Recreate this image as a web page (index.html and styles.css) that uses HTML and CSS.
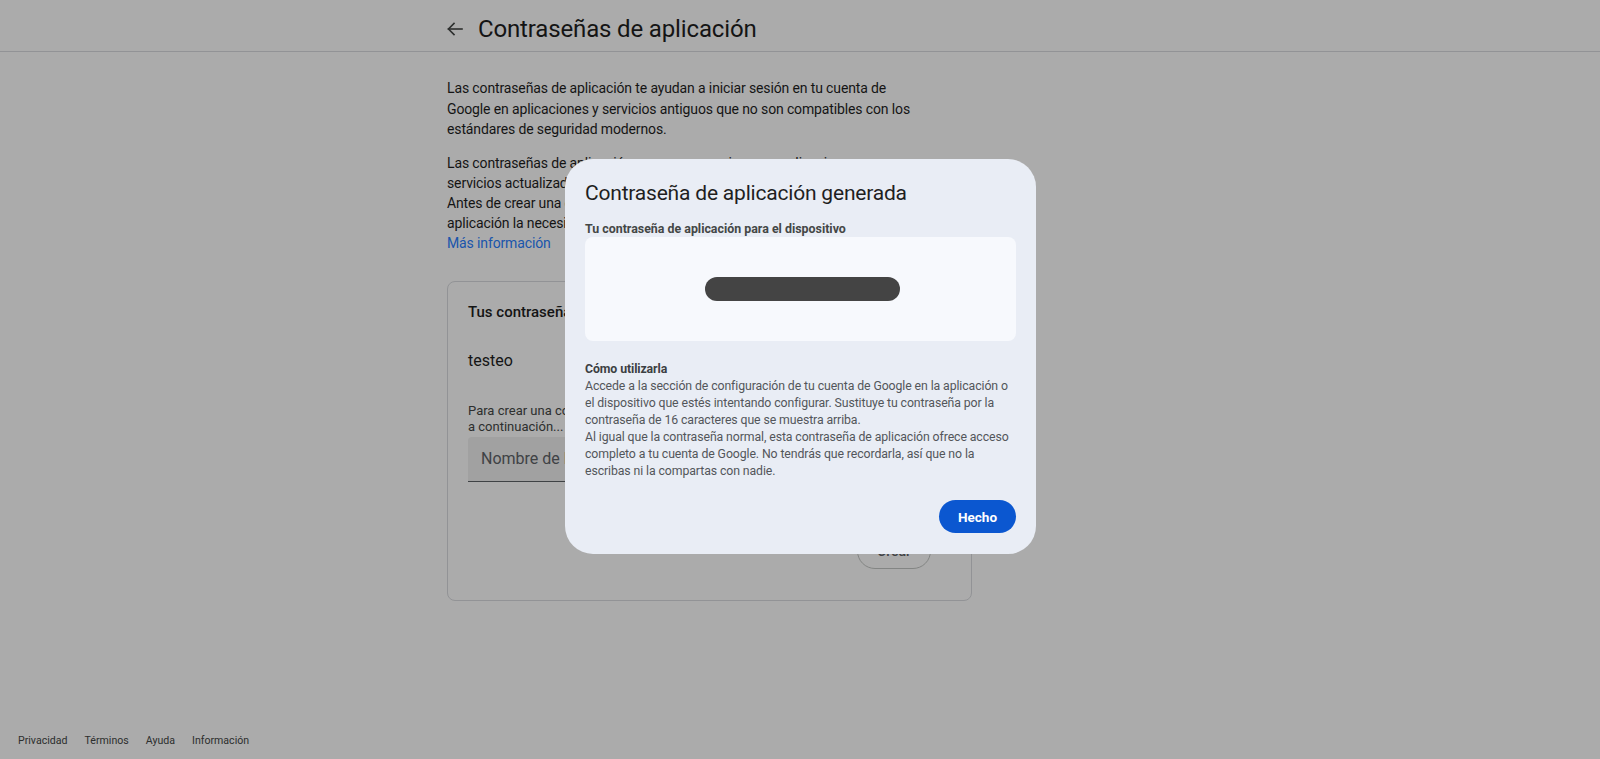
FILE: index.html
```html
<!DOCTYPE html>
<html lang="es">
<head>
<meta charset="utf-8">
<title>Contraseñas de aplicación</title>
<link rel="stylesheet" href="styles.css">
</head>
<body>
<div class="page">
  <header class="topbar">
    <div class="topbar-inner">
      <span class="back-icon">
        <svg width="24" height="24" viewBox="0 0 24 24" fill="none" stroke="#444746" stroke-width="1.6" stroke-linecap="square"><path d="M5.5 12H19"/><path d="M11 6.5L5.5 12L11 17.5"/></svg>
      </span>
      <h1 class="page-title">Contraseñas de aplicación</h1>
    </div>
  </header>

  <main class="content">
    <p class="intro">Las contraseñas de aplicación te ayudan a iniciar sesión en tu cuenta de Google en aplicaciones y servicios antiguos que no son compatibles con los estándares de seguridad modernos.</p>
    <p class="intro intro-tight">Las contraseñas de aplicación no son necesarias para aplicaciones y servicios actualizados.<br>Antes de crear una contraseña de aplicación, comprueba si tu<br>aplicación la necesita para iniciar sesión.<br><a class="link" href="#">Más información</a></p>

    <section class="card">
      <h2 class="card-title">Tus contraseñas de aplicación</h2>
      <div class="app-name">testeo</div>
      <p class="helper">Para crear una contraseña de aplicación nueva, escribe el nombre de la aplicación<br>a continuación...</p>
      <div class="field"><span class="placeholder">Nombre de la aplicación</span></div>
      <div class="card-actions"><button class="btn-outline">Crear</button></div>
    </section>
  </main>

  <footer class="footer">
    <a href="#">Privacidad</a>
    <a href="#">Términos</a>
    <a href="#">Ayuda</a>
    <a href="#">Información</a>
  </footer>
</div>

<div class="scrim"></div>

<div class="dialog" role="dialog">
  <h2 class="dialog-title">Contraseña de aplicación generada</h2>
  <div class="dialog-label">Tu contraseña de aplicación para el dispositivo</div>
  <div class="pw-box"><span class="pw-redacted"></span></div>
  <div class="howto">
    <div class="howto-title">Cómo utilizarla</div>
    <div>Accede a la sección de configuración de tu cuenta de Google en la aplicación o el dispositivo que estés intentando configurar. Sustituye tu contraseña por la contraseña de 16 caracteres que se muestra arriba.</div>
    <div>Al igual que la contraseña normal, esta contraseña de aplicación ofrece acceso completo a tu cuenta de Google. No tendrás que recordarla, así que no la escribas ni la compartas con nadie.</div>
  </div>
  <div class="dialog-actions"><button class="btn-primary">Hecho</button></div>
</div>
</body>
</html>
```

FILE: styles.css
```css
* { box-sizing: border-box; }
html, body { margin: 0; padding: 0; height: 100%; }
body {
  font-family: Roboto, "Liberation Sans", Arial, sans-serif;
  color: #1f1f1f;
  background: #ffffff;
  overflow: hidden;
}
.page {
  min-height: 100vh;
  display: flex;
  flex-direction: column;
}
.topbar {
  height: 52px;
  border-bottom: 1px solid #dadce0;
}
.topbar-inner {
  height: 51px;
  margin-left: 443px;
  display: flex;
  align-items: center;
  gap: 11px;
}
.back-icon { display: flex; width: 24px; height: 24px; margin-top: 6px; }
.page-title {
  margin: 0;
  font-size: 24px;
  font-weight: 400;
  line-height: 32px;
  letter-spacing: -0.15px;
  color: #1f1f1f;
  padding-top: 6px;
}
.content {
  flex: 1;
  margin-left: 447px;
  width: 525px;
  padding-top: 26px;
}
.intro {
  margin: 0 0 13px;
  width: 470px;
  font-size: 14px;
  line-height: 20.5px;
  letter-spacing: -0.13px;
  color: #1f1f1f;
}
.intro-tight { line-height: 20px; }
.link { color: #2b7fff; text-decoration: none; }
.card {
  margin-top: 28px;
  border: 1px solid #dadce0;
  border-radius: 8px;
  padding: 20px 20px 31px;
}
.card-title {
  margin: 0;
  font-size: 15px;
  font-weight: 500;
  line-height: 20px;
}
.app-name {
  margin-top: 27px;
  font-size: 16px;
  line-height: 24px;
}
.helper {
  margin: 30px 0 2px;
  font-size: 13px;
  line-height: 16px;
  color: #444746;
}
.field {
  height: 45px;
  background: #f0f0f0;
  border-bottom: 1px solid #5f6368;
  border-radius: 4px 4px 0 0;
  display: flex;
  align-items: center;
  padding-left: 13px;
}
.placeholder { font-size: 16px; color: #5f6368; }
.card-actions {
  margin-top: 51px;
  display: flex;
  justify-content: flex-end;
  padding-right: 20px;
}
.btn-outline {
  width: 74px;
  height: 36px;
  border: 1px solid #c4c7c5;
  border-radius: 18px;
  background: transparent;
  font-family: inherit;
  font-size: 14px;
  font-weight: 500;
  color: #5f6368;
}
.footer {
  height: 38px;
  display: flex;
  align-items: center;
  gap: 17px;
  padding-left: 18px;
  padding-top: 1px;
}
.footer a {
  font-size: 10.6px;
  color: #444746;
  text-decoration: none;
}
.scrim {
  position: fixed;
  inset: 0;
  background: rgba(0, 0, 0, 0.33);
}
.dialog {
  position: fixed;
  left: 565px;
  top: 159px;
  width: 471px;
  background: #e9edf5;
  border-radius: 28px;
  padding: 20px 20px 21px;
}
.dialog-title {
  margin: 0;
  font-size: 21px;
  font-weight: 400;
  line-height: 28px;
  letter-spacing: -0.2px;
  color: #1f1f1f;
}
.dialog-label {
  margin-top: 14px;
  font-size: 12.4px;
  font-weight: 700;
  line-height: 16px;
  color: #444746;
}
.pw-box {
  height: 104px;
  background: #f7f9fd;
  border-radius: 8px;
  display: flex;
  align-items: center;
  justify-content: center;
}
.pw-redacted {
  display: block;
  width: 195px;
  height: 24px;
  border-radius: 12px;
  background: #444444;
  margin-left: 3px;
}
.howto {
  margin-top: 20px;
  font-size: 12.3px;
  line-height: 17px;
  letter-spacing: -0.1px;
  color: #53565a;
}
.howto-title { font-weight: 700; color: #3c3f42; }
.dialog-actions {
  margin-top: 20px;
  display: flex;
  justify-content: flex-end;
}
.btn-primary {
  width: 77px;
  height: 33px;
  border: none;
  border-radius: 17px;
  background: #0b57d0;
  color: #ffffff;
  font-family: inherit;
  font-size: 13.5px;
  font-weight: 700;
}
```
